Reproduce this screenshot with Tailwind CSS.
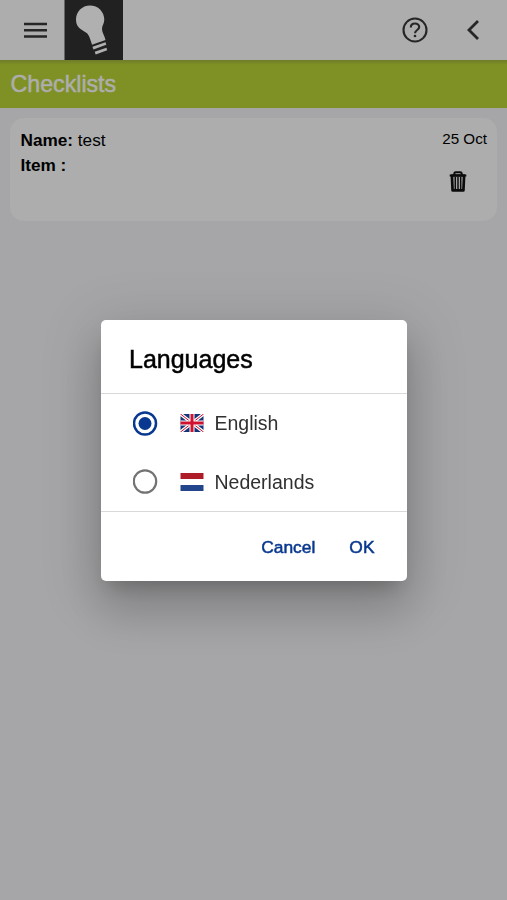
<!DOCTYPE html>
<html lang="en">
<head>
<meta charset="utf-8">
<meta name="viewport" content="width=device-width, initial-scale=1">
<title>Checklists</title>
<script src="https://cdn.jsdelivr.net/npm/@tailwindcss/browser@4"></script>
</head>
<body class="h-[900px] overflow-hidden bg-[#a6a6a8] font-['Liberation_Sans',Arial,sans-serif] text-black">
<main class="flex h-[900px] flex-col">
  <header class="flex h-[60px] shrink-0 items-center bg-[#adadad] text-[#262626]">
    <button class="ml-6 mr-[17px] block" aria-label="Menu">
      <svg class="block" width="23" height="16" viewBox="0 0 23 16" fill="none" stroke="currentColor" stroke-width="2.500"><path d="M0 2h23M0 8.200h23M0 14.400h23"/></svg>
    </button>
    <svg class="block" width="59" height="60" viewBox="0 0 59 60">
      <path d="M.5 0h58.500v60H.5z" fill="#212121"/>
      <g fill="#b0b0b0">
        <path d="M26 5.500C34 5.500 40.300 11.700 40.300 19.500C40.300 23.500 38 25.500 38 29C38 32.500 40.700 36 41.500 40L28 44.700C26.400 40.500 26 36.500 23.300 33.500C20.400 30.400 12 29 12 19.700C12 11.700 18 5.500 26 5.500Z"/>
        <path d="M28.500 46.800L41.500 42.200L42.300 44.800L29.400 49.500Z"/>
        <path d="M30.700 51.800L42.400 47.700L43.200 50.300L31.700 54.400Z"/>
      </g>
    </svg>
    <div class="ml-auto mr-[39px]">
      <svg class="block" width="26" height="26" viewBox="0 0 26 26" fill="none" stroke="currentColor"><circle cx="13" cy="13" r="11.500" stroke-width="2.100"/><path d="M8.800 10.500C8.800 8.100 10.500 6.500 13 6.500S17.200 8.100 17.200 10.100C17.200 13 13 13 13 16.200" stroke-width="2.100"/><circle cx="13" cy="19" r="1.350" fill="currentColor" stroke="none"/></svg>
    </div>
    <svg class="mr-7 block" width="12" height="20" viewBox="0 0 12 20" fill="none" stroke="currentColor" stroke-width="2.800"><path d="M11 1L2 10l9 9"/></svg>
  </header>
  <h1 class="flex h-12 shrink-0 items-center bg-[#7f9125] bg-linear-to-b from-[#6f7d28] to-[#7f9125] to-[5px] pl-[10.500px] text-[23.200px] text-[#adadad] [-webkit-text-stroke:0.5px]">Checklists</h1>
  <section class="mx-[10px] mt-[10px] flex h-[103px] justify-between rounded-[14px] bg-[#adadad] pl-[10.500px] pr-[10px] pt-[10px]">
    <div class="text-[17.200px] leading-[25px]">
      <p><b>Name:</b> test</p>
      <p><b>Item :</b></p>
    </div>
    <div class="flex flex-col items-end">
      <time class="text-[15.200px] leading-[22px]">25 Oct</time>
      <svg class="mr-5 mt-[21px] block" width="18" height="21" viewBox="0 0 18 21" fill="none" stroke="#0c0c0c"><path d="M.7 4.500h16.600M5.300 4V2.800Q5.300 1.300 6.800 1.300h4.400q1.500 0 1.500 1.500V4" stroke-width="2"/><path d="M2.900 4.500h12.200l-.7 14.900H3.600z" stroke-width="2.700" stroke-linejoin="round"/><path d="M6.300 6v12M9 6v12M11.700 6v12" stroke-width="1.500"/></svg>
    </div>
  </section>
</main>
<div class="fixed inset-0 flex items-start justify-center pt-[320px]">
  <div role="dialog" class="flex h-[261px] w-[306px] flex-col rounded-[5px] bg-white shadow-[0_13px_18px_-8px_rgba(0,0,0,0.2),0_29px_46px_4px_rgba(0,0,0,0.14),0_11px_56px_10px_rgba(0,0,0,0.12)]">
    <h2 class="flex h-[73px] shrink-0 items-center pl-[28.500px] pt-[7px] text-[25px] [-webkit-text-stroke:0.5px]">Languages</h2>
    <div class="flex h-[119px] shrink-0 flex-col border-y border-[#d9d9d9] text-[19.500px] text-[#303030]">
      <label class="flex h-[59px] items-center pl-8">
        <svg class="mr-[22px]" width="25" height="25" viewBox="0 0 25 25" fill="none"><circle cx="12" cy="12.500" r="11" stroke="#08388f" stroke-width="2.500"/><circle cx="12" cy="12.500" r="6.500" fill="#08388f"/></svg>
        <svg class="mr-[11px]" width="24" height="18" viewBox="0 0 24 18"><path fill="#163475" d="M.5 0h23v18H.5z"/><path d="M.5 0l23 18M23.500 0l-23 18" stroke="#fff" stroke-width="3.200"/><path d="M.5 0l23 18M23.500 0l-23 18" stroke="#d0112f" stroke-width="1"/><path d="M12 0v18M.5 9h23" stroke="#fff" stroke-width="5"/><path d="M12 0v18M.5 9h23" stroke="#d0112f" stroke-width="3"/></svg>
        <span class="pt-px">English</span>
      </label>
      <label class="flex h-[59px] items-center pl-8">
        <svg class="mr-[22px]" width="25" height="25" viewBox="0 0 25 25" fill="none"><circle cx="12" cy="12.500" r="11.200" stroke="#737373" stroke-width="2.200"/></svg>
        <svg class="mr-[11px]" width="24" height="18" viewBox="0 0 24 18"><path fill="#fff" d="M0 0h24v18H0z"/><path fill="#ae1c28" d="M.5 0h23v6H.5z"/><path fill="#21468b" d="M.5 12h23v6H.5z"/></svg>
        <span class="pt-px">Nederlands</span>
      </label>
    </div>
    <div class="flex flex-1 items-center justify-end gap-[34px] pr-8 pt-px text-[17.400px] text-[#08388f] [-webkit-text-stroke:0.5px]">
      <button>Cancel</button>
      <button>OK</button>
    </div>
  </div>
</div>
</body>
</html>
